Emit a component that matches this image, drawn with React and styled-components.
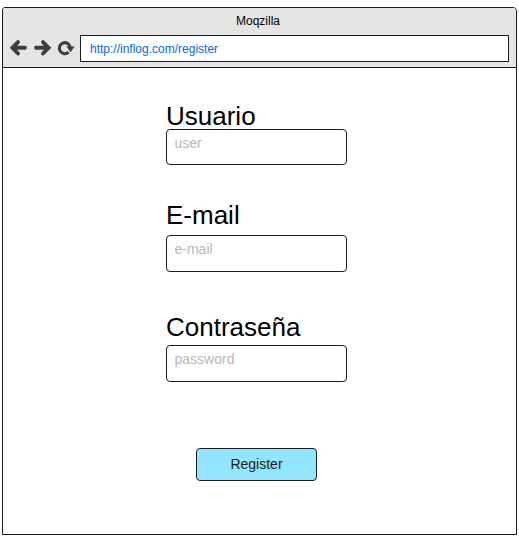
import React from 'react';
import styled, { createGlobalStyle } from 'styled-components';

const INK = '#1c1c1e';

const GlobalStyle = createGlobalStyle`
  * { box-sizing: border-box; }
  body {
    margin: 0;
    background: #fff;
    font-family: Arial, "Liberation Sans", sans-serif;
    overflow: hidden;
  }
`;

const Page = styled.div`
  width: 519px;
  height: 540px;
  padding: 7px 2px 5px;
`;

const BrowserWindow = styled.main`
  width: 515px;
  height: 528px;
  border: 1px solid ${INK};
  border-radius: 3px 4px 0 0;
  overflow: hidden;
  background: #fff;
`;

const Header = styled.header`
  height: 60px;
  background: #e5e5e5;
  border-bottom: 1px solid ${INK};
`;

const Title = styled.div`
  height: 27px;
  padding-right: 3px;
  line-height: 26px;
  font-size: 12px;
  text-align: center;
  color: #000;
`;

const Toolbar = styled.div`
  display: flex;
  height: 27px;
  padding-right: 7px;
`;

const NavIcons = styled.svg`
  flex: none;
  width: 77px;
  height: 27px;
`;

const AddressBar = styled.div`
  flex: 1;
  padding-left: 9px;
  border: 1px solid ${INK};
  background: #fff;
  color: #0b66dc;
  font-size: 12px;
  line-height: 26px;
`;

const Form = styled.form`
  display: flex;
  flex-direction: column;
  width: 181px;
  margin: 35px 0 0 163px;
`;

const Field = styled.label`
  display: flex;
  flex-direction: column;
  gap: ${(p) => p.$gap}px;
  margin-bottom: ${(p) => p.$after}px;
`;

const Caption = styled.span`
  font-size: 26px;
  line-height: 26px;
  color: #000;
`;

const Input = styled.input`
  width: 100%;
  height: ${(p) => p.$height}px;
  padding: 0 7.5px ${(p) => p.$height - 27}px;
  border: 1px solid ${INK};
  border-radius: 4px;
  background: #fff;
  font: 14px Arial, "Liberation Sans", sans-serif;
  outline: none;
  &::placeholder { color: #b8b8b8; opacity: 1; }
`;

const SubmitButton = styled.button`
  width: 121px;
  height: 33px;
  margin-left: 30px;
  padding: 0 0 2px;
  border: 1px solid ${INK};
  border-radius: 4px;
  background: #93e4fd;
  color: #222;
  font: 14px Arial, "Liberation Sans", sans-serif;
`;

const fields = [
  { caption: 'Usuario', hint: 'user', type: 'text', gap: 0, height: 36, after: 37 },
  { caption: 'E-mail', hint: 'e-mail', type: 'email', gap: 7, height: 37, after: 42 },
  { caption: 'Contraseña', hint: 'password', type: 'password', gap: 5, height: 37, after: 66 },
];

export default function App() {
  return (
    <>
      <GlobalStyle />
      <Page>
        <BrowserWindow>
          <Header>
            <Title>Moqzilla</Title>
            <Toolbar>
              <NavIcons viewBox="0 0 77 27" fill="none" stroke="#3e3e3e">
                <path d="M15 7.1 L9.4 12.8 L15 18.5 M10 12.8 H22" strokeWidth="3.9" strokeLinecap="round" />
                <path d="M40 7.1 L45.6 12.8 L40 18.5 M45 12.8 H33" strokeWidth="3.9" strokeLinecap="round" />
                <path d="M65.6 17.2 A5.5 5.5 0 1 1 67.3 12.4" strokeWidth="3.1" />
                <path d="M63.4 11.2 L71.6 11.5 L67.5 17.3 Z" fill="#3e3e3e" stroke="none" />
              </NavIcons>
              <AddressBar>http://inflog.com/register</AddressBar>
            </Toolbar>
          </Header>
          <Form onSubmit={(e) => e.preventDefault()}>
            {fields.map((f) => (
              <Field key={f.caption} $gap={f.gap} $after={f.after}>
                <Caption>{f.caption}</Caption>
                <Input type={f.type} placeholder={f.hint} $height={f.height} />
              </Field>
            ))}
            <SubmitButton type="submit">Register</SubmitButton>
          </Form>
        </BrowserWindow>
      </Page>
    </>
  );
}
